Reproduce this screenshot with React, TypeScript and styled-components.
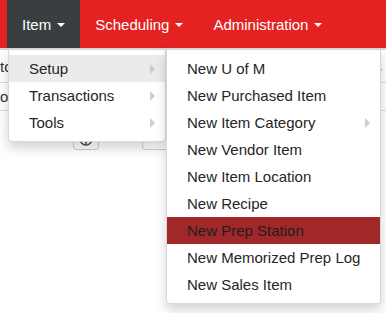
import React from 'react';
import styled, { createGlobalStyle } from 'styled-components';

const GlobalStyle = createGlobalStyle`
  html, body {
    margin: 0;
    padding: 0;
    background: #fff;
    font-family: "Liberation Sans", Arial, sans-serif;
    overflow: hidden;
  }
`;

const Page = styled.div`
  position: relative;
  width: 386px;
  height: 313px;
  overflow: hidden;
`;

const Navbar = styled.div`
  display: flex;
  height: 48px;
  padding-left: 7px;
  background: #e42222;
`;

const NavItem = styled.div<{ $active?: boolean }>`
  position: relative;
  display: flex;
  align-items: center;
  gap: 6px;
  padding: 0 15px 0 15px;
  height: 48px;
  color: #fff;
  font-size: 15px;
  background: ${(p) => (p.$active ? '#393e41' : 'transparent')};
`;

const Caret = styled.span`
  display: inline-block;
  width: 0;
  height: 0;
  margin-top: 2px;
  border-top: 4px solid #fff;
  border-left: 4px solid transparent;
  border-right: 4px solid transparent;
`;

const Content = styled.div`
  border-top: 2px solid #d6d6d6;
  display: flex;
  flex-direction: column;
`;

const GridRow = styled.div<{ $h: number }>`
  display: flex;
  justify-content: space-between;
  align-items: center;
  height: ${(p) => p.$h}px;
  border-bottom: 1px solid #d9d9d9;
  font-size: 15px;
  color: #333;
`;

const ButtonRow = styled.div`
  display: flex;
  gap: 43px;
  padding: 18px 0 0 73px;
`;

const ToolButton = styled.div<{ $w: number }>`
  display: flex;
  justify-content: center;
  align-items: flex-end;
  width: ${(p) => p.$w}px;
  height: 20px;
  border: 1px solid #cfcfcf;
  border-top: none;
  border-radius: 0 0 4px 4px;
`;

const Menu = styled.div<{ $left: number; $width: number }>`
  position: absolute;
  left: ${(p) => p.$left}px;
  top: 49px;
  width: ${(p) => p.$width}px;
  padding: 5px 0;
  background: #fff;
  border: 1px solid rgba(0, 0, 0, 0.15);
  border-radius: 0 0 4px 4px;
  box-shadow: 0 6px 12px rgba(0, 0, 0, 0.175);
  box-sizing: border-box;
  z-index: 10;
`;

const MenuItem = styled.div<{ $tone?: 'hover' | 'active' }>`
  position: relative;
  display: flex;
  align-items: center;
  justify-content: space-between;
  height: 27px;
  padding: 0 10px 0 20px;
  font-size: 15px;
  color: ${(p) => (p.$tone === 'active' ? '#1e1e1e' : '#262626')};
  background: ${(p) =>
    p.$tone === 'hover' ? '#ebebeb' : p.$tone === 'active' ? '#a02828' : 'transparent'};
  white-space: nowrap;
`;

const SubArrow = styled.span`
  width: 0;
  height: 0;
  border-left: 5px solid #cccccc;
  border-top: 5px solid transparent;
  border-bottom: 5px solid transparent;
`;

const InfoIcon = () => (
  <svg width="14" height="10" viewBox="0 0 14 10" style={{ display: 'block' }}>
    <path d="M1 0 A6 6 0 0 0 13 0" fill="none" stroke="#444" strokeWidth="1.3" />
    <line x1="7" y1="0" x2="7" y2="5" stroke="#444" strokeWidth="1.5" />
  </svg>
);

const setupItems = [
  'New U of M',
  'New Purchased Item',
  'New Item Category',
  'New Vendor Item',
  'New Item Location',
  'New Recipe',
  'New Prep Station',
  'New Memorized Prep Log',
  'New Sales Item',
];

export default function App() {
  return (
    <Page>
      <GlobalStyle />
      <Navbar>
        <NavItem $active>
          Item <Caret />
        </NavItem>
        <NavItem>
          Scheduling <Caret />
        </NavItem>
        <NavItem>
          Administration <Caret />
        </NavItem>
      </Navbar>
      <Content>
        <GridRow $h={32}>
          <span>to</span>
          <span>s&nbsp;</span>
        </GridRow>
        <GridRow $h={27}>
          <span>op</span>
          <span>D&nbsp;&nbsp;</span>
        </GridRow>
        <ButtonRow>
          <ToolButton $w={24}>
            <InfoIcon />
          </ToolButton>
          <ToolButton $w={60} />
        </ButtonRow>
      </Content>

      <Menu $left={8} $width={158}>
        <MenuItem $tone="hover">
          Setup <SubArrow />
        </MenuItem>
        <MenuItem>
          Transactions <SubArrow />
        </MenuItem>
        <MenuItem>
          Tools <SubArrow />
        </MenuItem>
      </Menu>

      <Menu $left={166} $width={215}>
        {setupItems.map((label) => (
          <MenuItem key={label} $tone={label === 'New Prep Station' ? 'active' : undefined}>
            {label}
            {label === 'New Item Category' && <SubArrow />}
          </MenuItem>
        ))}
      </Menu>
    </Page>
  );
}
